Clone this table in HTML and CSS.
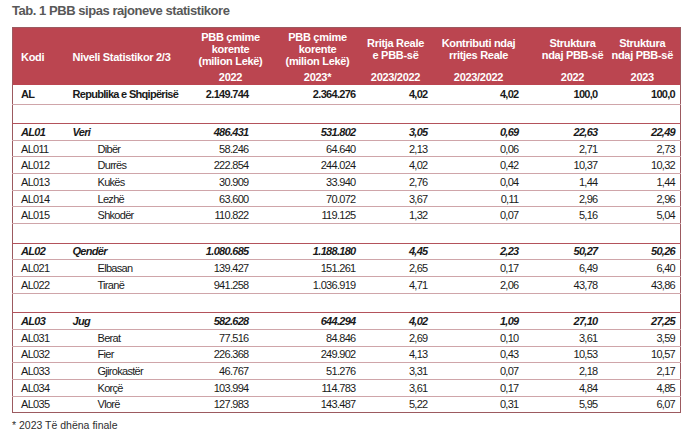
FILE: index.html
```html
<!DOCTYPE html>
<html lang="sq">
<head>
<meta charset="utf-8">
<link rel="stylesheet" href="styles.css">
</head>
<body>
<div class="page">
  <h1 class="title">Tab. 1 PBB sipas rajoneve statistikore</h1>
  <table class="tbl">
    <colgroup>
      <col class="c1"><col class="c2"><col class="c3"><col class="c4"><col class="c5"><col class="c6"><col class="c7"><col class="c8">
    </colgroup>
    <thead>
      <tr class="h1">
        <th rowspan="2" class="left kodi">Kodi</th>
        <th rowspan="2" class="left niv">Niveli Statistikor 2/3</th>
        <th class="h3">PBB çmime<br>korente<br>(milion Lekë)</th>
        <th class="h4">PBB çmime<br>korente<br>(milion Lekë)</th>
        <th class="h5">Rritja Reale<br>e PBB-së</th>
        <th class="h6">Kontributi ndaj<br>rritjes Reale</th>
        <th class="h7">Struktura<br>ndaj PBB-së</th>
        <th class="h8">Struktura<br>ndaj PBB-së</th>
      </tr>
      <tr class="h2">
        <th class="h3">2022</th>
        <th class="h4">2023*</th>
        <th class="h5">2023/2022</th>
        <th class="h6">2023/2022</th>
        <th class="h7">2022</th>
        <th class="h8">2023</th>
      </tr>
    </thead>
    <tbody>
      <tr class="nat"><td>AL</td><td>Republika e Shqipërisë</td><td>2.149.744</td><td>2.364.276</td><td>4,02</td><td>4,02</td><td>100,0</td><td>100,0</td></tr>
      <tr class="blank"><td colspan="8"></td></tr>
      <tr class="grp"><td>AL01</td><td>Veri</td><td>486.431</td><td>531.802</td><td>3,05</td><td>0,69</td><td>22,63</td><td>22,49</td></tr>
      <tr class="sub"><td>AL011</td><td>Dibër</td><td>58.246</td><td>64.640</td><td>2,13</td><td>0,06</td><td>2,71</td><td>2,73</td></tr>
      <tr class="sub"><td>AL012</td><td>Durrës</td><td>222.854</td><td>244.024</td><td>4,02</td><td>0,42</td><td>10,37</td><td>10,32</td></tr>
      <tr class="sub"><td>AL013</td><td>Kukës</td><td>30.909</td><td>33.940</td><td>2,76</td><td>0,04</td><td>1,44</td><td>1,44</td></tr>
      <tr class="sub"><td>AL014</td><td>Lezhë</td><td>63.600</td><td>70.072</td><td>3,67</td><td>0,11</td><td>2,96</td><td>2,96</td></tr>
      <tr class="sub"><td>AL015</td><td>Shkodër</td><td>110.822</td><td>119.125</td><td>1,32</td><td>0,07</td><td>5,16</td><td>5,04</td></tr>
      <tr class="blank"><td colspan="8"></td></tr>
      <tr class="grp"><td>AL02</td><td>Qendër</td><td>1.080.685</td><td>1.188.180</td><td>4,45</td><td>2,23</td><td>50,27</td><td>50,26</td></tr>
      <tr class="sub"><td>AL021</td><td>Elbasan</td><td>139.427</td><td>151.261</td><td>2,65</td><td>0,17</td><td>6,49</td><td>6,40</td></tr>
      <tr class="sub"><td>AL022</td><td>Tiranë</td><td>941.258</td><td>1.036.919</td><td>4,71</td><td>2,06</td><td>43,78</td><td>43,86</td></tr>
      <tr class="blank"><td colspan="8"></td></tr>
      <tr class="grp"><td>AL03</td><td>Jug</td><td>582.628</td><td>644.294</td><td>4,02</td><td>1,09</td><td>27,10</td><td>27,25</td></tr>
      <tr class="sub"><td>AL031</td><td>Berat</td><td>77.516</td><td>84.846</td><td>2,69</td><td>0,10</td><td>3,61</td><td>3,59</td></tr>
      <tr class="sub"><td>AL032</td><td>Fier</td><td>226.368</td><td>249.902</td><td>4,13</td><td>0,43</td><td>10,53</td><td>10,57</td></tr>
      <tr class="sub"><td>AL033</td><td>Gjirokastër</td><td>46.767</td><td>51.276</td><td>3,31</td><td>0,07</td><td>2,18</td><td>2,17</td></tr>
      <tr class="sub"><td>AL034</td><td>Korçë</td><td>103.994</td><td>114.783</td><td>3,61</td><td>0,17</td><td>4,84</td><td>4,85</td></tr>
      <tr class="sub"><td>AL035</td><td>Vlorë</td><td>127.983</td><td>143.487</td><td>5,22</td><td>0,31</td><td>5,95</td><td>6,07</td></tr>
    </tbody>
  </table>
  <p class="note">* 2023 Të dhëna finale</p>
</div>
</body>
</html>
```

FILE: styles.css
```css
html, body {
  margin: 0;
  padding: 0;
  background: #ffffff;
}

.page {
  padding: 3px 0 0 12px;
  font-family: "Liberation Sans", Arial, sans-serif;
  color: #1a1a1a;
}

.title {
  margin: 0 0 9px 0;
  font-size: 13px;
  line-height: 15px;
  font-weight: bold;
  letter-spacing: -0.45px;
  color: #585858;
}

.tbl {
  width: 668px;
  table-layout: fixed;
  border-collapse: collapse;
  border: 1px solid #9c5a60;
  font-size: 11px;
  letter-spacing: -0.7px;
}

.c1 { width: 52px; }
.c2 { width: 124px; }
.c3 { width: 84px; }
.c4 { width: 90px; }
.c5 { width: 70px; }
.c6 { width: 92px; }
.c7 { width: 80px; }
.c8 { width: 76px; }

.tbl thead th {
  background: #bb4550;
  color: #ffffff;
  font-weight: bold;
  font-size: 11px;
  line-height: 12px;
  letter-spacing: -0.3px;
  text-align: center;
  padding: 0;
}

.tbl .h1 th {
  height: 41px;
  vertical-align: middle;
}

.tbl .h2 th {
  height: 16px;
  vertical-align: middle;
}

.tbl thead th.left {
  text-align: left;
  padding-left: 8px;
}

.tbl th.h5 { padding-right: 4px; }
.tbl th.h7 { padding-left: 16px; }

.tbl td {
  height: 15.7px;
  padding: 0;
  line-height: 12px;
  border-top: 1px solid #cfa5a9;
  text-align: right;
  white-space: nowrap;
}

.tbl td:nth-child(1),
.tbl td:nth-child(2) {
  text-align: left;
  padding-left: 8px;
}

.tbl td:nth-child(3) { padding-right: 24px; }
.tbl td:nth-child(4) { padding-right: 7px; }
.tbl td:nth-child(5) { padding-right: 5px; }
.tbl td:nth-child(6) { padding-right: 6px; }
.tbl td:nth-child(7) { padding-right: 7px; }
.tbl td:nth-child(8) { padding-right: 5px; }

.tbl .sub td:nth-child(2) { padding-left: 33px; }

.tbl .nat td {
  font-weight: bold;
  height: 18.5px;
  border-top: none;
}

.tbl .grp td {
  font-weight: bold;
  font-style: italic;
  border-top: 1px solid #b3525b;
}

.tbl .blank td {
  height: 18.5px;
}

.note {
  margin: 6px 0 0 0;
  font-size: 10.5px;
  line-height: 12px;
  color: #2e2e2e;
}
```
